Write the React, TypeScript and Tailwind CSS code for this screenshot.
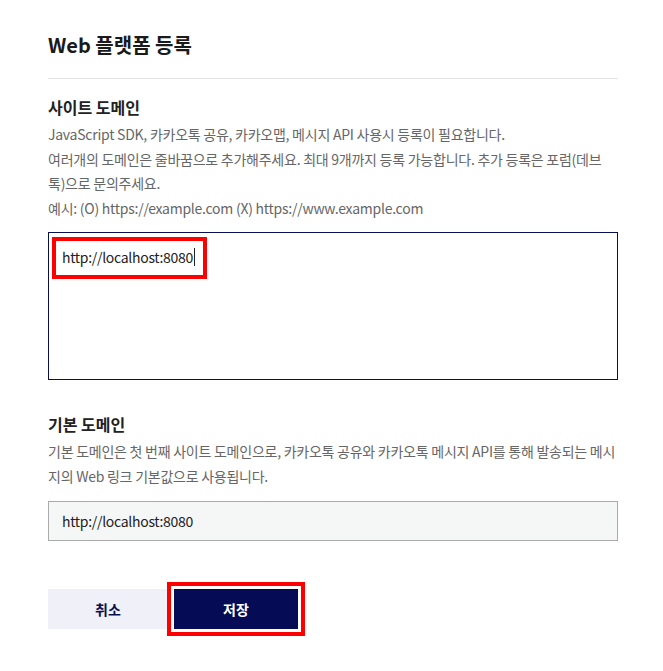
import React from "react";

const font = { fontFamily: '"Noto Sans CJK KR", "Noto Sans", sans-serif' };

export default function App() {
  return (
    <div className="min-h-screen bg-white text-[#222]" style={font}>
      <div className="ml-[48px] w-[570px] pt-[31px]">
        <h1 className="text-[20px] font-bold leading-[28px] text-[#1a1a1a]">Web 플랫폼 등록</h1>
        <div className="mt-[19px] border-t border-[#e2e2e2]" />

        <h2 className="mt-[16px] text-[16px] font-bold leading-[24px]">사이트 도메인</h2>
        <div className="mt-[3px] text-[14px] leading-[24.5px] tracking-[-0.25px] text-[#666]">
          <p>JavaScript SDK, 카카오톡 공유, 카카오맵, 메시지 API 사용시 등록이 필요합니다.</p>
          <p>
            여러개의 도메인은 줄바꿈으로 추가해주세요. 최대 9개까지 등록 가능합니다. 추가 등록은 포럼(데브톡)으로
            문의주세요.
          </p>
          <p>예시: (O) https://example.com (X) https://www.example.com</p>
        </div>

        <div className="relative mt-[12px] h-[148px] border border-[#0a0f55] bg-white px-[13px] py-[13px]">
          <div className="flex items-center text-[14px] leading-[22px] tracking-[-0.3px] text-[#222]">
            <span>http://localhost:8080</span>
            <span className="ml-[1px] inline-block h-[18px] w-[1px] bg-[#222]" />
          </div>
          <div className="pointer-events-none absolute left-[3px] top-[4px] h-[42px] w-[155px] border-[4px] border-[#f00]" />
        </div>

        <h2 className="mt-[32px] text-[16px] font-bold leading-[24px]">기본 도메인</h2>
        <p className="mt-[3px] text-[14px] leading-[25px] tracking-[-0.25px] text-[#666]">
          기본 도메인은 첫 번째 사이트 도메인으로, 카카오톡 공유와 카카오톡 메시지 API를 통해 발송되는 메시지의 Web 링크 기본값으로 사용됩니다.
        </p>

        <div className="mt-[12px] flex h-[40px] items-center border border-[#aaa] bg-[#f5f6f6] px-[13px] text-[14px] tracking-[-0.3px] text-[#222]">
          http://localhost:8080
        </div>

        <div className="mt-[48px] flex gap-[6px]">
          <button
            type="button"
            className="h-[40px] w-[120px] bg-[#eff0f8] text-[14px] font-bold text-[#0b0f50]"
          >
            취소
          </button>
          <div className="relative">
            <button
              type="button"
              className="h-[40px] w-[124px] bg-[#050b55] text-[14px] font-bold text-white"
            >
              저장
            </button>
            <div className="pointer-events-none absolute -left-[7px] -top-[7px] h-[54px] w-[138px] border-[4px] border-[#f00]" />
          </div>
        </div>
      </div>
    </div>
  );
}
